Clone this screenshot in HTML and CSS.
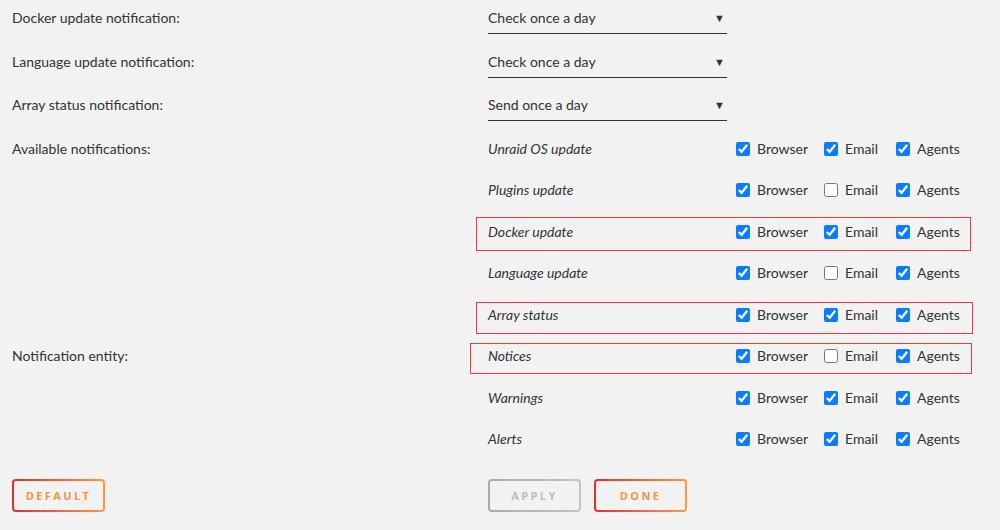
FILE: index.html
```html
<!DOCTYPE html>
<html lang="en">
<head>
  <meta charset="UTF-8">
  <meta name="viewport" content="width=device-width, initial-scale=1.0">
  <title>Notification Settings</title>
  <link rel="stylesheet" href="styles.css">
</head>
<body>

  <div class="settings">
    <!-- Update schedules -->
    <div class="field">
      <div class="field-label">Docker update notification:</div>
      <div class="field-value">
        <div class="select">Check once a day <span class="caret">&#9660;</span></div>
      </div>
    </div>

    <div class="field">
      <div class="field-label">Language update notification:</div>
      <div class="field-value">
        <div class="select">Check once a day <span class="caret">&#9660;</span></div>
      </div>
    </div>

    <div class="field">
      <div class="field-label">Array status notification:</div>
      <div class="field-value">
        <div class="select">Send once a day <span class="caret">&#9660;</span></div>
      </div>
    </div>

    <!-- Available notifications -->
    <div class="field">
      <div class="field-label event-label">Available notifications:</div>
      <div class="event-list">
        <div class="event">
          <span class="event-name">Unraid OS update</span>
          <label class="opt opt-browser"><input type="checkbox" checked> Browser</label>
          <label class="opt opt-email"><input type="checkbox" checked> Email</label>
          <label class="opt"><input type="checkbox" checked> Agents</label>
        </div>
        <div class="event">
          <span class="event-name">Plugins update</span>
          <label class="opt opt-browser"><input type="checkbox" checked> Browser</label>
          <label class="opt opt-email"><input type="checkbox"> Email</label>
          <label class="opt"><input type="checkbox" checked> Agents</label>
        </div>
        <div class="event hl hl-docker">
          <span class="event-name">Docker update</span>
          <label class="opt opt-browser"><input type="checkbox" checked> Browser</label>
          <label class="opt opt-email"><input type="checkbox" checked> Email</label>
          <label class="opt"><input type="checkbox" checked> Agents</label>
        </div>
        <div class="event">
          <span class="event-name">Language update</span>
          <label class="opt opt-browser"><input type="checkbox" checked> Browser</label>
          <label class="opt opt-email"><input type="checkbox"> Email</label>
          <label class="opt"><input type="checkbox" checked> Agents</label>
        </div>
        <div class="event hl hl-array">
          <span class="event-name">Array status</span>
          <label class="opt opt-browser"><input type="checkbox" checked> Browser</label>
          <label class="opt opt-email"><input type="checkbox" checked> Email</label>
          <label class="opt"><input type="checkbox" checked> Agents</label>
        </div>
      </div>
    </div>

    <!-- Notification entity -->
    <div class="field">
      <div class="field-label event-label">Notification entity:</div>
      <div class="event-list">
        <div class="event hl hl-notices">
          <span class="event-name">Notices</span>
          <label class="opt opt-browser"><input type="checkbox" checked> Browser</label>
          <label class="opt opt-email"><input type="checkbox"> Email</label>
          <label class="opt"><input type="checkbox" checked> Agents</label>
        </div>
        <div class="event">
          <span class="event-name">Warnings</span>
          <label class="opt opt-browser"><input type="checkbox" checked> Browser</label>
          <label class="opt opt-email"><input type="checkbox" checked> Email</label>
          <label class="opt"><input type="checkbox" checked> Agents</label>
        </div>
        <div class="event">
          <span class="event-name">Alerts</span>
          <label class="opt opt-browser"><input type="checkbox" checked> Browser</label>
          <label class="opt opt-email"><input type="checkbox" checked> Email</label>
          <label class="opt"><input type="checkbox" checked> Agents</label>
        </div>
      </div>
    </div>

    <!-- Buttons -->
    <div class="actions">
      <div class="field-label">
        <button class="btn">Default</button>
      </div>
      <div class="btn-group">
        <button class="btn btn-disabled" disabled>Apply</button>
        <button class="btn">Done</button>
      </div>
    </div>
  </div>

</body>
</html>
```

FILE: styles.css
```css
body {
  font-family: Lato, "Open Sans", sans-serif;
  font-size: 14px;
  color: #333333;
  background-color: #f2f2f2;
  margin: 0;
  padding: 0 12px;
}

.settings {
  display: flex;
  flex-direction: column;
}

.field {
  display: flex;
}

.field-label {
  width: 476px;
  flex-shrink: 0;
  padding-top: 8px;
  line-height: 20px;
}

.field-value {
  height: 43.7px;
  padding-top: 8px;
  box-sizing: border-box;
}

/* Dropdown look-alike */
.select {
  width: 239px;
  line-height: 20px;
  padding-bottom: 5px;
  border-bottom: 1px solid #333333;
  display: flex;
  justify-content: space-between;
  align-items: center;
}

.caret {
  font-size: 11px;
  margin-right: 2px;
}

/* Notification rows */
.event-list {
  display: flex;
  flex-direction: column;
  flex: 1;
}

.event {
  position: relative;
  display: flex;
  align-items: center;
  height: 41.43px;
  box-sizing: border-box;
  padding-bottom: 5.5px;
  line-height: 20px;
}

.event-name {
  width: 248px;
  font-style: italic;
}

.opt {
  display: flex;
  align-items: center;
  gap: 7px;
}

.opt-browser {
  width: 88px;
}

.opt-email {
  width: 72px;
}

.opt input {
  width: 14px;
  height: 14px;
  margin: 0;
  accent-color: #0a7cff;
}

/* Red highlight frames */
.hl::after {
  content: "";
  position: absolute;
  border: 1px solid #f03a3a;
}

.hl-docker::after {
  top: 3.5px;
  bottom: 4.5px;
  left: -12px;
  right: 17px;
}

.hl-array::after {
  top: 5px;
  bottom: 4.5px;
  left: -12px;
  right: 15px;
}

.hl-notices::after {
  top: 4.5px;
  bottom: 6px;
  left: -18px;
  right: 16px;
}

/* Buttons */
.actions {
  display: flex;
  margin-top: 8.5px;
}

.btn-group {
  display: flex;
  gap: 13px;
  padding-top: 8px;
}

.btn {
  width: 93px;
  height: 33px;
  font-family: "Open Sans", sans-serif;
  font-size: 11px;
  font-weight: bold;
  letter-spacing: 2.4px;
  text-transform: uppercase;
  color: #f39347;
  border: 2px solid transparent;
  border-radius: 4px;
  background:
    linear-gradient(#f2f2f2, #f2f2f2) padding-box,
    linear-gradient(90deg, #e22f2f, #ff9a3c) border-box;
  cursor: pointer;
  padding: 0;
}

.btn-disabled {
  color: #bdbdbd;
  background:
    linear-gradient(#f2f2f2, #f2f2f2) padding-box,
    linear-gradient(90deg, #aaaaaa, #c4c4c4) border-box;
  cursor: default;
}
```
